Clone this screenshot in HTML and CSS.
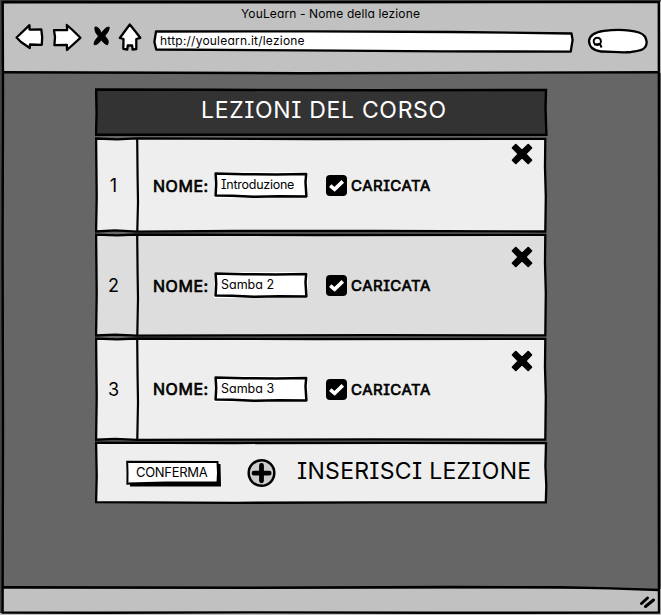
FILE: index.html
```html
<!DOCTYPE html>
<html lang="it">
<head>
<meta charset="utf-8">
<title>YouLearn - Nome della lezione</title>
<link rel="stylesheet" href="styles.css">
</head>
<body>
<svg class="defs" aria-hidden="true">
  <symbol id="close" viewBox="0 0 22 22"><path d="M4.8 1.6 11 7.6 17.2 1.6 20.4 4.8 14.4 11 20.4 17.2 17.2 20.4 11 14.4 4.8 20.4 1.6 17.2 7.6 11 1.6 4.8Z" stroke="#000" stroke-width="1.8" stroke-linejoin="round"/></symbol>
  <symbol id="check" viewBox="0 0 21 21"><rect width="21" height="21" rx="4"/><path d="M4.2 10.6 8.6 14.4 16.8 6.4" fill="none" stroke="#fff" stroke-width="3.6"/></symbol>
  <symbol id="field" viewBox="0 0 94 26"><path d="M0 0H94V26H0Z" fill="#fff"/><path d="M1.6 1.6 30 2.2 62 2.5 92.2 2 91.5 10 92.4 24.4 65 24.2 40 24.8 18 23.8 1.6 23.6 2.2 12Z" fill="#fff" stroke="#000" stroke-width="2.5" stroke-linejoin="round"/></symbol>
</svg>
<div class="window">
  <svg class="sketch" width="661" height="615" viewBox="0 0 661 615" fill="none" stroke="#000" stroke-width="2.4">
    <path d="M1 0V613M0 .5H661" stroke="#444" stroke-width="2"/>
    <path d="M2.7 2 3 90 2.6 250 3 430 2.6 612.5 100 612.8 250 612.4 430 612.8 659 612.6 658.7 430 659 200 658.8 2 300 2.3Z"/>
    <path d="M3 72.2 300 73.2 659 72.2M3 587.3 250 587.8 450 587 560 587.2 610 588.4 659 590"/>
  </svg>
  <header class="chrome">
    <div class="title">YouLearn - Nome della lezione</div>
    <nav class="bar">
      <svg class="nav" width="134" height="32" viewBox="0 0 134 32" fill="#fff" stroke="#000" stroke-width="2.3" stroke-linejoin="round">
        <path d="M1.6 15.5 14.5 3.2 14.5 7.6 26.3 7.3 27.2 15 26.8 22.8 15 22.5 14.8 26 6 20Z"/>
        <path d="M39 8.2 52.2 8 51.8 3 57.5 8 65.4 15.8 52 28 51.9 22.8 39.4 23.2 40 15Z"/>
        <path d="M80 5C84 4.5 85 9 86.5 11C89 7.5 91 5 94.2 5.2C94.5 9 91 12 89.8 14C92 17 94.5 18 92.5 22.8C89 22 87.5 19 86.2 17.8C84 21 81.5 23.5 79 22.5C79 18 82.5 16.5 83.4 14C80.5 11 79.5 8.5 80 5Z" fill="#000" stroke-width="1"/>
        <path d="M114.8 2.5 104.8 16 108.5 17 108.3 26.8 112.3 27.5 112.8 23.5 117.1 23.3 117.6 27.7 121.3 27 121.3 17 125.3 15.8 120 9Z"/>
      </svg>
      <div class="url">
        <svg class="sketch" width="422" height="24" viewBox="0 0 422 24"><path d="M3 2.5 160 2.3 300 3 418.5 4.5 419.6 11 417.7 22.6 290 22.4 150 21.3 3.2 20.5 1.4 13Z" fill="#fff" stroke="#000" stroke-width="2.3" stroke-linejoin="round"/></svg>
        <span>http://youlearn.it/lezione</span>
      </div>
      <svg class="search" width="62" height="26" viewBox="0 0 62 26" fill="#fff" stroke="#000" stroke-width="2.3"><path d="M2 13C2.5 7 8 4 17 2.8C28 1.5 43 1.8 52 4.5C59 7 59 11 59.7 14C59.5 22 53 22.8 44 24C34 25 23 23.4 14 23.5C6 22.5 2.3 19 2 13Z"/><circle cx="10.3" cy="13.3" r="3.6" stroke-width="2"/><path d="M7 16.6 13 16 14.6 19.5" fill="none" stroke-width="2"/></svg>
    </nav>
  </header>
  <main class="content">
    <section class="panel">
      <div class="head">
        <svg class="sketch" width="453" height="48" viewBox="0 0 453 48"><path d="M1.1 1.5 120 1.8 280 2.3 451 2 450.5 20 451.4 47 250 46.7 130 46.8 1 46.8 1.6 25Z" fill="#333" stroke="#000" stroke-width="2.4"/></svg>
        <h1>LEZIONI DEL CORSO</h1>
      </div>
      <div class="row first">
        <svg class="sketch" width="453" height="96" viewBox="0 0 453 96"><path d="M1.1 1.5 22 2.3 42 1.4 220 2 450.3 1.8 450 30 450.8 60 450.3 94.5 280 94 140 94 42 94.6 20 93.4 1.1 94.5 1.7 60Z" fill="#eee" stroke="#000" stroke-width="2.3"/><path d="M42.2 2 42.6 40 43 65 42.3 94" stroke="#000" stroke-width="2.2" fill="none"/></svg>
        <div class="num">1</div>
        <div class="fields"><span class="name">NOME:</span><div class="input"><svg class="sketch" width="94" height="26"><use href="#field"/></svg><span class="v1">Introduzione</span></div><svg class="check" width="21" height="21"><use href="#check"/></svg><span class="loaded">CARICATA</span></div>
        <svg class="close" width="22" height="22"><use href="#close"/></svg>
      </div>
      <div class="row">
        <svg class="sketch" width="453" height="104" viewBox="0 0 453 104"><path d="M1.1 1.6 22 2.4 42 1.5 220 2 450.3 1.8 450 30 450.8 60 450.3 102.4 280 102.2 140 102.4 42 102.6 20 101.6 1.1 102.5 1.7 60Z" fill="#ddd" stroke="#000" stroke-width="2.3"/><path d="M42.2 2 42.6 40 43 65 42.3 102" stroke="#000" stroke-width="2.2" fill="none"/></svg>
        <div class="num">2</div>
        <div class="fields"><span class="name">NOME:</span><div class="input"><svg class="sketch" width="94" height="26"><use href="#field"/></svg><span class="v2">Samba 2</span></div><svg class="check" width="21" height="21"><use href="#check"/></svg><span class="loaded">CARICATA</span></div>
        <svg class="close" width="22" height="22"><use href="#close"/></svg>
      </div>
      <div class="row last">
        <svg class="sketch" width="453" height="104" viewBox="0 0 453 104"><path d="M1.1 1.6 22 2.4 42 1.5 220 2 450.3 1.8 450 30 450.8 60 450.3 102.6 280 102.4 140 102.6 42 102.8 20 101.8 1.1 102.7 1.7 60Z" fill="#eee" stroke="#000" stroke-width="2.3"/><path d="M42.2 2 42.6 40 43 65 42.3 102" stroke="#000" stroke-width="2.2" fill="none"/></svg>
        <div class="num">3</div>
        <div class="fields"><span class="name">NOME:</span><div class="input"><svg class="sketch" width="94" height="26"><use href="#field"/></svg><span class="v2">Samba 3</span></div><svg class="check" width="21" height="21"><use href="#check"/></svg><span class="loaded">CARICATA</span></div>
        <svg class="close" width="22" height="22"><use href="#close"/></svg>
      </div>
      <div class="foot">
        <svg class="sketch" width="453" height="63" viewBox="0 0 453 63"><path d="M1.1 1.7 140 2 300 1.8 451 2.2 450.4 25 451.3 45 450.8 61.4 280 61.4 140 61.8 1.1 61.2 1.7 35Z" fill="#eee" stroke="#000" stroke-width="2.3"/></svg>
        <div class="button"><svg class="sketch" width="97" height="28" viewBox="0 0 97 28"><path d="M4 4 94.5 4 95 26.4 4 26.4Z"/><path d="M1.2 1.7 91.5 2 92 13 91.5 22.4 40 22.5 1.4 23.6 1.5 13Z" fill="#fff" stroke="#000" stroke-width="2"/></svg><span>CONFERMA</span></div>
        <svg class="plus" width="30" height="30" viewBox="0 0 30 30"><circle cx="15.5" cy="15" r="12.8" fill="#ccc" stroke="#000" stroke-width="2.5"/><path d="M15.5 7.5V22.8M8 15.2H23.2" stroke="#000" stroke-width="4.8" stroke-linecap="round"/></svg>
        <div class="insert">INSERISCI LEZIONE</div>
      </div>
    </section>
  </main>
  <footer class="status"><svg width="20" height="16" viewBox="0 0 20 16" stroke="#000" stroke-width="3" stroke-linecap="round"><path d="M3.5 8.5 9.5 3M7.5 11.5 15.5 5" /></svg></footer>
</div>
</body>
</html>
```
FILE: styles.css
```css
* { box-sizing: border-box; }
body {
  margin: 0;
  overflow: hidden;
  font-family: Inter, "Open Sans", sans-serif;
  font-feature-settings: "cv08", "cv11";
  color: #000;
}
.defs { position: absolute; width: 0; height: 0; }
.window {
  position: relative;
  isolation: isolate;
  display: flex;
  flex-direction: column;
  width: 661px;
  height: 615px;
  background: #666;
}
.sketch { position: absolute; left: 0; top: 0; z-index: -1; display: block; }
.window > .sketch { z-index: 1; }
.chrome { height: 73px; padding-top: 6px; background: #c1c1c1; }
.title { height: 16px; font-size: 12px; line-height: 16px; text-align: center; letter-spacing: .13px; }
.bar { display: flex; height: 32px; padding-left: 15px; }
.nav { flex: none; }
.url {
  position: relative;
  isolation: isolate;
  width: 422px;
  height: 24px;
  margin: 7px 0 0 4px;
  padding-left: 7px;
  font-size: 12px;
  line-height: 24px;
  letter-spacing: .22px;
}
.search { margin: 6px 0 0 12px; }
.content { flex: 1; padding: 15px 0 0 95px; }
.panel { width: 453px; }
.head, .row, .foot, .button, .input { position: relative; isolation: isolate; }
.head { height: 48px; margin-bottom: 1px; }
h1 { margin: 0; font-size: 23px; font-weight: 400; line-height: 45px; letter-spacing: .67px; color: #fff; padding-left: 106px; white-space: nowrap; }
.row { display: flex; height: 104px; }
.first { height: 96px; }
.num { display: flex; align-items: center; justify-content: center; width: 37px; font-size: 18px; }
.fields { display: flex; align-items: center; flex: 1; padding-left: 21px; white-space: nowrap; }
.name, .loaded { -webkit-text-stroke: .7px #000; }
.name { width: 61px; padding-top: 1px; font-size: 16px; letter-spacing: .55px; }
.last .name { transform: translateY(-1px); }
.input { width: 94px; height: 26px; padding-left: 7px; font-size: 12.5px; line-height: 25px; }
.v1 { letter-spacing: -.25px; }
.check { margin-left: 18px; }
.loaded { margin-left: 4px; font-size: 15px; letter-spacing: .5px; }
.close { margin: 13px 15px 0 0; }
.first .close { margin-top: 6px; }
.foot { display: flex; height: 63px; padding: 19px 0 0 31px; white-space: nowrap; }
.button { width: 97px; height: 28px; padding-left: 10px; font-size: 13px; line-height: 24px; letter-spacing: -.3px; }
.plus { margin: -2px 0 0 23px; }
.insert { margin-left: 21px; font-size: 23px; line-height: 23px; letter-spacing: .3px; }
.status { display: flex; justify-content: flex-end; height: 26px; padding: 6px 3px 0 0; background: #c1c1c1; }
```
